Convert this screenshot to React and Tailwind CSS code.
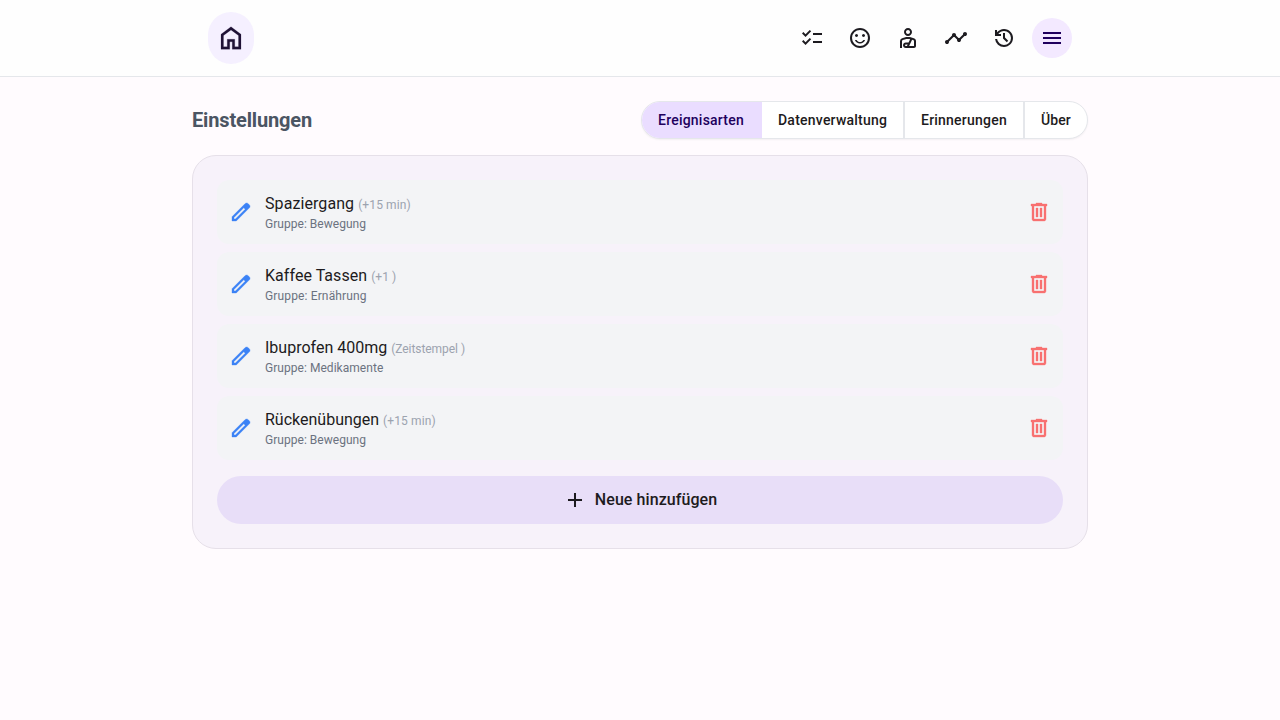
import React from "react";
import { MdOutlinePersonalInjury } from "react-icons/md";

const paths = {
  home: "M240-200h120v-240h240v240h120v-360L480-740 240-560v360Zm-80 80v-480l320-240 320 240v480H520v-240h-80v240H160Z",
  checklist:
    "M222-200 80-342l56-56 85 85 170-170 56 57-225 226Zm0-320L80-662l56-56 85 85 170-170 56 57-225 226Zm298 240v-80h360v80H520Zm0-320v-80h360v80H520Z",
  mood: "M620-520q25 0 42.5-17.5T680-580q0-25-17.5-42.5T620-640q-25 0-42.5 17.5T560-580q0 25 17.5 42.5T620-520Zm-280 0q25 0 42.5-17.5T400-580q0-25-17.5-42.5T340-640q-25 0-42.5 17.5T280-580q0 25 17.5 42.5T340-520Zm140 260q68 0 123.5-38.5T684-400h-66q-22 37-58.5 58.5T480-320q-43 0-79.5-21.5T342-400h-66q25 63 80.5 101.5T480-260Zm0 180q-83 0-156-31.5T197-197q-54-54-85.5-127T80-480q0-83 31.5-156T197-763q54-54 127-85.5T480-880q83 0 156 31.5T763-763q54 54 85.5 127T880-480q0 83-31.5 156T763-197q-54 54-127 85.5T480-80Zm0-80q134 0 227-93t93-227q0-134-93-227t-227-93q-134 0-227 93t-93 227q0 134 93 227t227 93Z",
  timeline:
    "M120-240q-33 0-56.5-23.5T40-320q0-33 23.5-56.5T120-400h10.5q4.5 0 9.5 2l182-182q-2-5-2-9.5V-600q0-33 23.5-56.5T400-680q33 0 56.5 23.5T480-600q0 2-2 20l102 102q5-2 9.5-2h21q4.5 0 9.5 2l142-142q-2-5-2-9.5V-640q0-33 23.5-56.5T840-720q33 0 56.5 23.5T920-640q0 33-23.5 56.5T840-560h-10.5q-4.5 0-9.5-2L678-420q2 5 2 9.5v10.5q0 33-23.5 56.5T600-320q-33 0-56.5-23.5T520-400v-10.5q0-4.5 2-9.5L420-522q-5 2-9.5 2H400q-2 0-20-2L198-340q2 5 2 9.5v10.5q0 33-23.5 56.5T120-240Z",
  history:
    "M480-120q-138 0-240.5-91.5T122-440h82q14 104 92.5 172T480-200q117 0 198.5-81.5T760-480q0-117-81.5-198.5T480-760q-69 0-129 32t-101 88h110v80H120v-240h80v94q51-64 124.5-99T480-840q75 0 140.5 28.5t114 77q48.5 48.5 77 114T840-480q0 75-28.5 140.5t-77 114q-48.5 48.5-114 77T480-120Zm112-192L440-464v-216h80v184l128 128-56 56Z",
  menu: "M120-240v-80h720v80H120Zm0-200v-80h720v80H120Zm0-200v-80h720v80H120Z",
  edit: "M200-200h57l391-391-57-57-391 391v57Zm-80 80v-170l528-527q12-11 26.5-17t30.5-6q16 0 31 6t26 18l55 56q12 11 17.5 26t5.5 30q0 16-5.5 30.5T817-647L290-120H120Z",
  trash:
    "M280-120q-33 0-56.5-23.5T200-200v-520h-40v-80h200v-40h240v40h200v80h-40v520q0 33-23.5 56.5T680-120H280Zm400-600H280v520h400v-520ZM360-280h80v-360h-80v360Zm160 0h80v-360h-80v360Z",
  add: "M440-440H200v-80h240v-240h80v240h240v80H520v240h-80v-240Z",
};

function Icon({ name, className = "size-6" }) {
  return (
    <svg viewBox="0 -960 960 960" fill="currentColor" stroke="currentColor" className={className} aria-hidden="true">
      <path d={paths[name]} />
    </svg>
  );
}

function NavButton({ active, children }) {
  return (
    <button
      className={
        active
          ? "rounded-full bg-[#f3e9ff] p-2 text-[#21005d]"
          : "rounded-full p-2 text-[#1d1b20]"
      }
    >
      {children}
    </button>
  );
}

const tabs = [
  {
    label: "Ereignisarten",
    className: "-my-px -ml-px w-[121px] border-r-2 border-[#eaddff] bg-[#eaddff] py-[9px] pl-[17px] tracking-[0.22px] text-[#21005d]",
  },
  { label: "Datenverwaltung", className: "w-[143px] border-r-2 border-gray-200 py-2 pl-4 tracking-[0.23px]" },
  { label: "Erinnerungen", className: "w-[120px] border-r-2 border-gray-200 py-2 pl-4 tracking-[0.22px]" },
  { label: "Über", className: "w-[62px] py-2 pl-4 tracking-[0.1px]" },
];

const events = [
  { name: "Spaziergang", detail: "(+15 min)", group: "Bewegung", nameClass: "tracking-[0.08px]", detailClass: "tracking-[0.12px]", groupClass: "tracking-[0.03px]" },
  { name: "Kaffee Tassen", detail: "(+1 )", group: "Ernährung", nameClass: "tracking-[0.05px]", detailClass: "tracking-[0.05px]", groupClass: "tracking-[0.14px]" },
  { name: "Ibuprofen 400mg", detail: "(Zeitstempel )", group: "Medikamente", nameClass: "tracking-normal", detailClass: "tracking-[-0.05px]", groupClass: "tracking-[0.04px]" },
  { name: "Rückenübungen", detail: "(+15 min)", group: "Bewegung", nameClass: "tracking-normal", detailClass: "tracking-[0.12px]", groupClass: "tracking-[0.03px]" },
];

function EventRow({ event }) {
  return (
    <li className="flex h-16 items-center rounded-xl bg-[#f3f4f6] px-3">
      <button className="text-[#3b82f6]">
        <Icon name="edit" className="size-6 stroke-[14]" />
      </button>
      <div className="ml-3 flex-1">
        <div className="text-base leading-6 text-[#1d1b20]">
          <span className={event.nameClass}>{event.name}</span>{" "}
          <span className={`text-xs text-[#9ca3af] ${event.detailClass}`}>{event.detail}</span>
        </div>
        <div className={`text-xs leading-4 text-[#6b7280] ${event.groupClass}`}>Gruppe: {event.group}</div>
      </div>
      <button className="text-[#f87171]">
        <Icon name="trash" className="size-6 stroke-[14]" />
      </button>
    </li>
  );
}

export default function App() {
  return (
    <div className="min-h-screen bg-[#fffbfe] font-[Roboto,sans-serif] text-[#1d1b20]">
      <header className="h-[77px] border-b border-gray-200 bg-[#fefefe]">
        <div className="mx-auto flex h-[76px] max-w-4xl items-center justify-between px-4">
          <button className="flex h-[52px] w-[46px] items-center justify-center rounded-full bg-[#f5f0ff] text-[#1f1235]">
            <Icon name="home" className="size-[30px] stroke-[6]" />
          </button>
          <nav className="flex items-center gap-2">
            <NavButton><Icon name="checklist" /></NavButton>
            <NavButton><Icon name="mood" /></NavButton>
            <NavButton><MdOutlinePersonalInjury className="size-6" /></NavButton>
            <NavButton><Icon name="timeline" /></NavButton>
            <NavButton><Icon name="history" /></NavButton>
            <NavButton active><Icon name="menu" /></NavButton>
          </nav>
        </div>
      </header>
      <main className="mx-auto max-w-4xl pt-6">
        <div className="mb-4 flex items-center justify-between">
          <h1 className="text-xl font-bold tracking-[-0.15px] text-[#4b5563]">Einstellungen</h1>
          <div className="flex overflow-hidden rounded-full border border-gray-200 bg-white shadow-xs">
            {tabs.map((tab) => (
              <button
                key={tab.label}
                className={`text-left text-sm font-medium whitespace-nowrap ${tab.className}`}
              >
                {tab.label}
              </button>
            ))}
          </div>
        </div>
        <section className="rounded-3xl border border-[#e6e0e9] bg-[#f7f2fa] p-6">
          <ul className="flex flex-col gap-2">
            {events.map((event) => (
              <EventRow key={event.name} event={event} />
            ))}
          </ul>
          <button className="mt-4 flex h-12 w-full items-center justify-center gap-2 rounded-full bg-[#e8def8] text-base font-medium tracking-[0.07px]">
            <Icon name="add" />
            Neue hinzufügen
          </button>
        </section>
      </main>
    </div>
  );
}
